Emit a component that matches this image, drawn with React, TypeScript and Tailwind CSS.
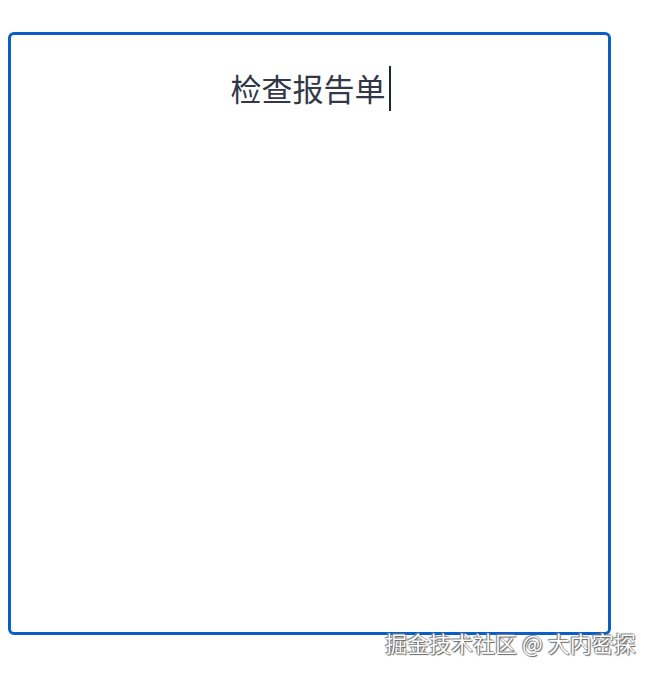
export default function App() {
  return (
    <div className="relative w-[656px] h-[674px] bg-white" style={{ fontFamily: '"Noto Sans CJK SC", "Noto Sans", sans-serif' }}>
      <div className="pt-[32px] pl-[8px]">
        <div className="w-[603px] h-[603px] border-[3px] border-[#0a5fc6] rounded-[6px] flex justify-center pt-[30px]">
          <div className="flex items-center h-[46px] pl-[2px]">
            <span className="text-[31px] leading-[46px] text-[#323846]">检查报告单</span>
            <span className="ml-[3px] w-[2px] h-[45px] bg-[#1f2430]" />
          </div>
        </div>
      </div>
      <div
        className="absolute left-[385px] top-[627px] text-[22px] leading-[30px] text-white whitespace-nowrap"
        style={{ textShadow: '0 0 1px #555, 1px 1px 1px #666, -1px -1px 1px #888' }}
      >
        掘金技术社区 @ 大内密探
      </div>
    </div>
  );
}
